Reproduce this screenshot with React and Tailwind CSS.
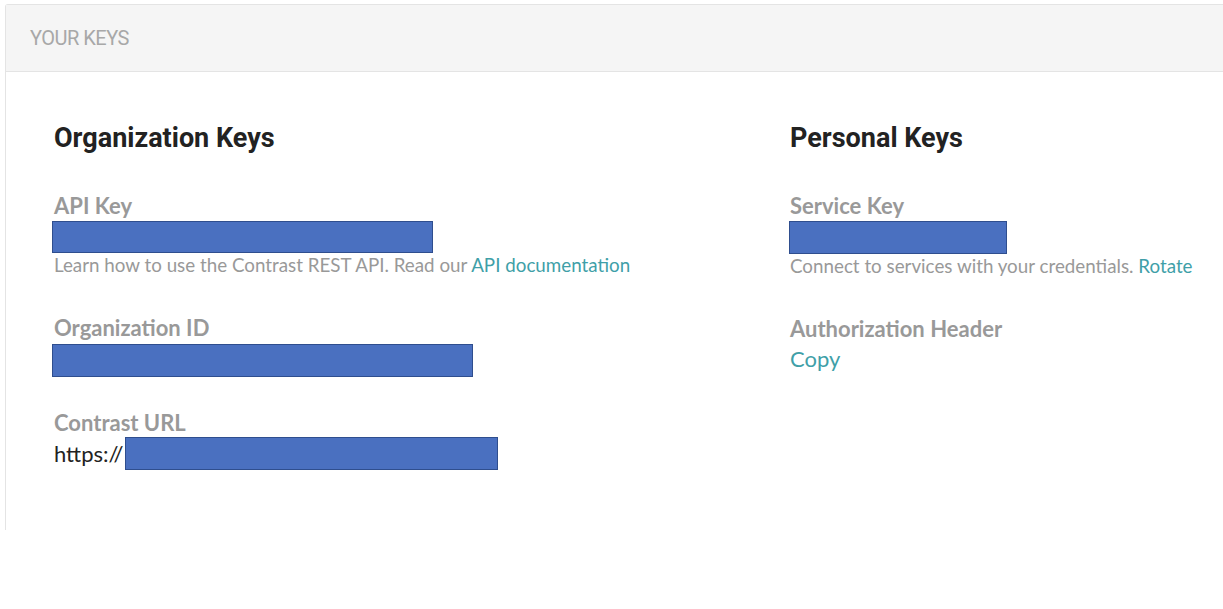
export default function App() {
  const lato = { fontFamily: "Lato, 'Open Sans', sans-serif" };
  const roboto = { fontFamily: "Roboto, sans-serif" };
  return (
    <div className="w-[1223px] h-[609px] overflow-hidden bg-white">
      <div className="mt-[4px] ml-[5px] w-[1240px] h-[526px] border-l border-t border-r border-[#e4e4e4] rounded-tl-[3px] bg-white">
        <div className="h-[67px] bg-[#f5f5f5] border-b border-[#e4e4e4] pl-[24px] flex items-center">
          <span className="text-[20px] text-[#a8a8a8] tracking-[-0.5px]" style={roboto}>
            YOUR KEYS
          </span>
        </div>
        <div className="flex pl-[48px] pt-[49px]" style={lato}>
          <div className="w-[736px] flex flex-col">
            <h2 className="text-[27px] leading-[34px] font-bold text-[#222]" style={roboto}>
              Organization Keys
            </h2>
            <div className="mt-[39px] text-[22px] leading-[24px] font-bold text-[#999]">API Key</div>
            <div className="mt-[3px] -ml-[2px] w-[381px] h-[32px] bg-[#4a70c0] border border-[#2f4e8e]" />
            <div className="text-[18.8px] leading-[24px] text-[#999]">
              Learn how to use the Contrast REST API. Read our <span className="text-[#3f9fa8]">API documentation</span>
            </div>
            <div className="mt-[39px] text-[22px] leading-[24px] font-bold text-[#999]">Organization ID</div>
            <div className="mt-[4px] -ml-[2px] w-[421px] h-[33px] bg-[#4a70c0] border border-[#2f4e8e]" />
            <div className="mt-[34px] text-[22px] leading-[24px] font-bold text-[#999]">Contrast URL</div>
            <div className="mt-[2px] flex items-center">
              <span className="text-[22px] leading-[33px] text-[#222]">https://</span>
              <div className="ml-[2px] w-[373px] h-[33px] bg-[#4a70c0] border border-[#2f4e8e]" />
            </div>
          </div>
          <div className="flex flex-col">
            <h2 className="text-[27px] leading-[34px] font-bold text-[#222]" style={roboto}>
              Personal Keys
            </h2>
            <div className="mt-[39px] text-[22px] leading-[24px] font-bold text-[#999]">Service Key</div>
            <div className="mt-[3px] -ml-[1px] w-[218px] h-[33px] bg-[#4a70c0] border border-[#2f4e8e]" />
            <div className="text-[18.8px] leading-[24px] text-[#999]">
              Connect to services with your credentials. <span className="text-[#3f9fa8]">Rotate</span>
            </div>
            <div className="mt-[39px] text-[22px] leading-[24px] font-bold text-[#999]">Authorization Header</div>
            <div className="mt-[6px] text-[22px] leading-[24px] text-[#3f9fa8]">Copy</div>
          </div>
        </div>
      </div>
    </div>
  );
}
